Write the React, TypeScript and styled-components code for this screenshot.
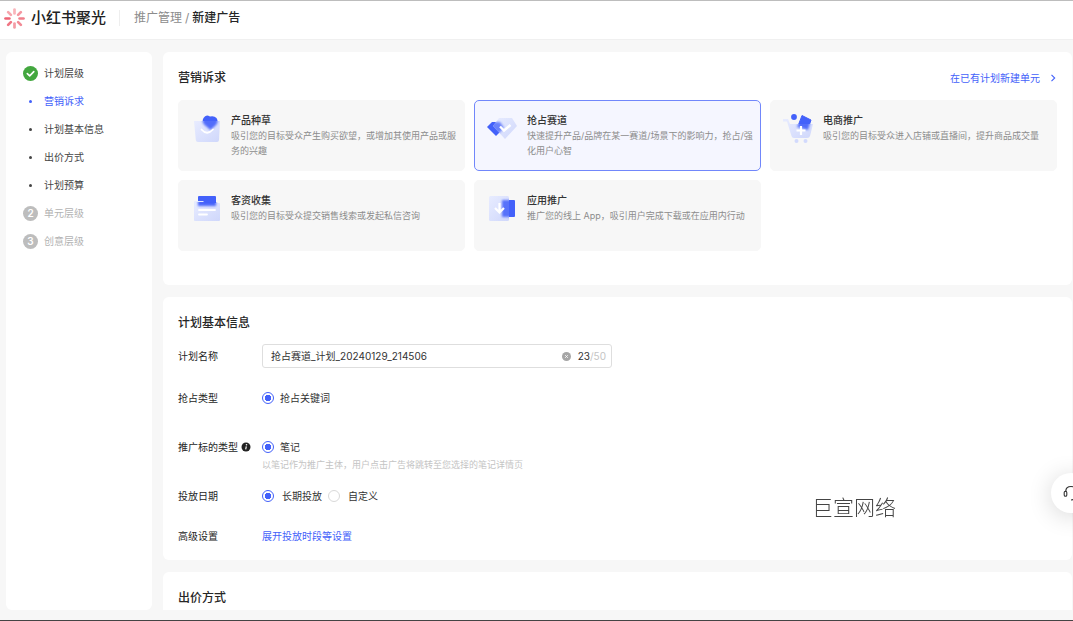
import React, { useState } from "react";
import styled, { createGlobalStyle } from "styled-components";

const blue = "#4361fa";

const GlobalStyle = createGlobalStyle`
  *, *::before, *::after { box-sizing: border-box; }
  body {
    margin: 0;
    background: #f7f7f7;
    color: #333;
    font-family: Inter, "Noto Sans CJK SC", sans-serif;
    font-size: 10px;
    line-height: 16px;
    overflow: hidden;
  }
  button, input { font: inherit; color: inherit; }
  h1, h2, h3, p, ul, ol { margin: 0; padding: 0; }
  ul, ol { list-style: none; }
`;

const Page = styled.div`
  display: flex;
  flex-direction: column;
  height: 100vh;
  border-top: 1px solid #bdbdbd;
  border-bottom: 1px solid #444;
`;

const Header = styled.header`
  display: flex;
  align-items: center;
  flex: none;
  height: 39px;
  padding: 0 4px 4px;
  background: #fff;
  border-bottom: 1px solid #f0f0f0;
`;

const Brand = styled.a`
  display: flex;
  align-items: center;
  gap: 6px;
  padding-right: 13px;
  color: #222;
  font-size: 15px;
  font-weight: 500;
  text-decoration: none;
`;

const Breadcrumb = styled.nav`
  display: flex;
  gap: 3px;
  padding-left: 14px;
  border-left: 1px solid #eee;
  color: #8c8c8c;
  font-size: 12px;

  a { color: inherit; text-decoration: none; }
  strong { color: #262626; font-weight: 500; }
`;

const Body = styled.div`
  display: flex;
  flex: 1;
  gap: 11px;
  min-height: 0;
  padding: 12px 1px 10px 6px;
`;

const Sidebar = styled.aside`
  flex: none;
  width: 146px;
  padding: 7px 17px;
  background: #fff;
  border-radius: 6px;
`;

const Step = styled.li<{ $tone?: "active" | "muted" }>`
  display: flex;
  align-items: center;
  gap: 6px;
  height: 28px;
  color: ${(p) => (p.$tone === "active" ? blue : p.$tone === "muted" ? "#b3b3b3" : "#444")};

  a { color: inherit; text-decoration: none; }
`;

const Marker = styled.span`
  display: flex;
  align-items: center;
  justify-content: center;
  width: 15px;
  height: 15px;
`;

const Dot = styled.span`
  width: 3px;
  height: 3px;
  border-radius: 50%;
  background: currentColor;
`;

const Num = styled(Marker)`
  border-radius: 50%;
  background: #bdbdbd;
  color: #fff;
  font-weight: 600;
`;

const Main = styled.main`
  display: flex;
  flex: 1;
  flex-direction: column;
  gap: 12px;
  min-width: 0;
  overflow-y: auto;
  scrollbar-width: none;
`;

const Panel = styled.section`
  flex: none;
  padding: 16px 15px 12px;
  background: #fff;
  border-radius: 6px;
`;

const GoalPanel = styled(Panel)`
  padding-bottom: 34px;
`;

const BidPanel = styled(Panel)`
  padding-bottom: 48px;
`;

const PanelHead = styled.div`
  display: flex;
  align-items: center;
  justify-content: space-between;
  height: 20px;
`;

const Title = styled.h2`
  color: #262626;
  font-size: 12px;
  font-weight: 500;
  line-height: 20px;
`;

const MoreLink = styled.a`
  display: flex;
  align-items: center;
  gap: 9px;
  color: ${blue};
  text-decoration: none;
`;

const Goals = styled.div`
  display: grid;
  grid-template-columns: repeat(3, 1fr);
  gap: 9px;
  margin-top: 12px;
`;

const Goal = styled.button<{ $selected: boolean }>`
  display: flex;
  align-items: flex-start;
  gap: 8px;
  min-height: 71px;
  padding: 11px 5px 11px 12px;
  border: 1px solid ${(p) => (p.$selected ? "#7187fb" : "#f7f7f7")};
  border-radius: 5px;
  background: ${(p) => (p.$selected ? "#f5f6ff" : "#f7f7f7")};
  text-align: left;
  cursor: pointer;

  svg { flex: none; }
`;

const GoalText = styled.span`
  display: flex;
  flex-direction: column;
`;

const GoalName = styled.span`
  color: #333;
  font-weight: 500;
`;

const GoalDesc = styled.span`
  color: #8c8c8c;
  font-size: 9px;
  line-height: 15px;
`;

const Form = styled.form`
  display: flex;
  flex-direction: column;
  margin-top: 11px;
`;

const Row = styled.div<{ $h: number }>`
  display: flex;
  min-height: ${(p) => p.$h}px;
`;

const RowLabel = styled.div`
  display: flex;
  align-items: center;
  gap: 3px;
  flex: none;
  width: 84px;
  height: 24px;
  color: #262626;
`;

const Control = styled.div`
  display: flex;
  align-items: center;
  flex-wrap: wrap;
  gap: 6px;
  height: 24px;
`;

const Stack = styled.div`
  display: flex;
  flex-direction: column;
`;

const Hint = styled.p`
  color: #c4c4c4;
  font-size: 9px;
  line-height: 12px;
`;

const NameBox = styled.div`
  display: flex;
  align-items: center;
  width: 350px;
  max-width: 100%;
  height: 24px;
  padding: 0 5px 0 8px;
  border: 1px solid #dedede;
  border-radius: 3px;
`;

const NameInput = styled.input`
  flex: 1;
  min-width: 0;
  padding: 0;
  border: 0;
  outline: 0;
  background: none;
  color: #333;
`;

const Clear = styled.button`
  display: flex;
  margin-right: 7px;
  padding: 0;
  border: 0;
  background: none;
  cursor: pointer;
`;

const Count = styled.span`
  color: #c4c4c4;

  b { color: #333; font-weight: 400; }
`;

const RadioLabel = styled.label`
  display: flex;
  align-items: center;
  gap: 6px;
  color: #333;
  cursor: pointer;
`;

const DateLabel = styled(RadioLabel)`
  gap: 8px;
`;

const Radio = styled.input`
  appearance: none;
  width: 12px;
  height: 12px;
  margin: 0;
  border: 1px solid #d9d9d9;
  border-radius: 50%;
  background: #fff;

  &:checked {
    border-color: ${blue};
    background: radial-gradient(circle, ${blue} 0 3px, #fff 3px);
  }
`;

const ExpandLink = styled.a`
  color: ${blue};
  text-decoration: none;
`;

const Watermark = styled.div`
  position: fixed;
  right: 177px;
  bottom: 99px;
  color: #444;
  font-family: "Noto Sans CJK SC", sans-serif;
  font-size: 21px;
  font-weight: 300;
  line-height: 32px;
  pointer-events: none;
`;

const Support = styled.button`
  position: fixed;
  right: -18px;
  bottom: 108px;
  display: flex;
  align-items: center;
  justify-content: center;
  width: 40px;
  height: 40px;
  padding: 0;
  border: 0;
  border-radius: 50%;
  background: #fff;
  box-shadow: 0 3px 24px rgba(0, 0, 0, 0.16);
  cursor: pointer;
`;

const petals = ["#f9b4ba", "#f598a2", "#f17f8b", "#f28a95", "#f49ca5", "#f07684", "#ee6475", "#f6a6ae"];

const Logo = () => (
  <svg width="21" height="21" viewBox="0 0 21 21" aria-hidden="true">
    {petals.map((c, i) => (
      <path key={i} d="M10.5 1.5V5.4" stroke={c} strokeWidth="2.7" strokeLinecap="round" transform={`rotate(${i * 45} 10.5 10.5)`} />
    ))}
  </svg>
);

const Defs = () => (
  <svg width="0" height="0" style={{ position: "absolute" }} aria-hidden="true">
    <defs>
      <linearGradient id="pale" x1="0" y1="0" x2="1" y2="1">
        <stop offset="0" stopColor="#e8ecff" />
        <stop offset="1" stopColor="#cfd7fb" />
      </linearGradient>
      <filter id="soft" x="-30%" y="-30%" width="160%" height="160%">
        <feGaussianBlur stdDeviation="1.3" />
      </filter>
      <clipPath id="bagClip"><path d="M1 7H27L26 26Q25.800 28 24 28H5Q3 28 2.800 26Z" /></clipPath>
      <clipPath id="docClip"><rect x="1" y="8" width="26" height="19" /></clipPath>
      <clipPath id="gemClip"><path d="M12 3H25L30 11L18 24L6 11Z" /></clipPath>
      <clipPath id="appClip"><rect x="3" y="2" width="19" height="25" /></clipPath>
      <clipPath id="cartClip"><path d="M5 10H30L27 22Q26.500 24 24 24H11Q9 24 8.500 22Z" /></clipPath>
    </defs>
  </svg>
);

const bagHeart = "M17.500 16L11 10.500Q8.500 7.500 10.500 4Q13-.2 17 2.600Q21 1.500 23.500 4Q26 8 23 11Z";
const BagIcon = () => (
  <svg width="32" height="30" viewBox="-2 -2 32 30" aria-hidden="true">
    <path d={bagHeart} fill={blue} />
    <path d="M1 7H27L26 26Q25.800 28 24 28H5Q3 28 2.800 26Z" fill="url(#pale)" />
    <g clipPath="url(#bagClip)"><path d={bagHeart} fill={blue} opacity=".9" filter="url(#soft)" /></g>
    <path d="M8.500 15.500Q14 22 20 15.500" fill="none" stroke="#fff" strokeWidth="1.800" strokeLinecap="round" />
  </svg>
);

const GemIcon = () => (
  <svg width="32" height="30" viewBox="0 -3 32 30" aria-hidden="true">
    <path d="M5 7H13L17 13L9 21L0 12Z" fill={blue} />
    <path d="M12 3H25L30 11L18 24L6 11Z" fill="url(#pale)" />
    <g clipPath="url(#gemClip)"><path d="M5 7H13L17 13L9 21L0 12Z" fill={blue} opacity=".75" filter="url(#soft)" /></g>
    <path d="M13 11.500L17 15.500L23.500 10" fill="none" stroke="#fff" strokeWidth="2.400" />
  </svg>
);

const CartIcon = () => (
  <svg width="32" height="31" viewBox="0 -2 32 31" aria-hidden="true">
    <circle cx="11" cy="3" r="2.900" fill={blue} />
    <path d="M19 1.500L28 6L25 15L15 12Z" fill={blue} stroke={blue} strokeLinejoin="round" />
    <path d="M0 5H5L7 10H30L27 22Q26.500 24 24 24H11Q9 24 8.500 22L4 7.500H0Z" fill="url(#pale)" />
    <g clipPath="url(#cartClip)"><path d="M19 1.500L28 6L25 16L14 13Z" fill={blue} opacity=".9" filter="url(#soft)" /></g>
    <path d="M18 12V21M13.500 16.500H22.500" stroke="#fff" strokeWidth="2.200" />
    <circle cx="13.500" cy="27" r="2" fill="#d2dafd" />
    <circle cx="22.500" cy="27" r="2" fill="#d2dafd" />
  </svg>
);

const DocIcon = () => (
  <svg width="32" height="30" viewBox="-2 -2 32 30" aria-hidden="true">
    <rect x="5" y="2" width="18" height="10" rx="1" fill={blue} />
    <path d="M1 8Q1 7 2 7H10L12 9H26Q27 9 27 10V26Q27 27 26 27H2Q1 27 1 26Z" fill="url(#pale)" />
    <g clipPath="url(#docClip)"><rect x="5" y="2" width="18" height="10" fill={blue} opacity=".95" filter="url(#soft)" /></g>
    <path d="M6 16H22M6 20.500H14" stroke="#fff" strokeWidth="1.800" strokeLinecap="round" />
  </svg>
);

const AppIcon = () => (
  <svg width="32" height="30" viewBox="0 -2 32 30" aria-hidden="true">
    <rect x="15" y="6" width="13" height="17" rx="1" fill={blue} />
    <rect x="2" y="2" width="20" height="25" rx="1.500" fill="url(#pale)" />
    <g clipPath="url(#appClip)"><rect x="15" y="6" width="12" height="17" fill={blue} opacity=".85" filter="url(#soft)" /></g>
    <path d="M12.500 9V18M8 14L12.500 18.500L17 14" fill="none" stroke="#fff" strokeWidth="2.200" />
  </svg>
);

const goals = [
  { name: "产品种草", desc: "吸引您的目标受众产生购买欲望，或增加其使用产品或服务的兴趣", Icon: BagIcon },
  { name: "抢占赛道", desc: "快速提升产品/品牌在某一赛道/场景下的影响力，抢占/强化用户心智", Icon: GemIcon },
  { name: "电商推广", desc: "吸引您的目标受众进入店铺或直播间，提升商品成交量", Icon: CartIcon },
  { name: "客资收集", desc: "吸引您的目标受众提交销售线索或发起私信咨询", Icon: DocIcon },
  { name: "应用推广", desc: "推广您的线上 App，吸引用户完成下载或在应用内行动", Icon: AppIcon },
];

const subSteps = ["营销诉求", "计划基本信息", "出价方式", "计划预算"];

export default function App() {
  const [goal, setGoal] = useState("抢占赛道");
  const [name, setName] = useState("抢占赛道_计划_20240129_214506");

  return (
    <>
      <GlobalStyle />
      <Defs />
      <Page>
        <Header>
          <Brand href="#"><Logo />小红书聚光</Brand>
          <Breadcrumb>
            <a href="#">推广管理</a><span>/</span><strong>新建广告</strong>
          </Breadcrumb>
        </Header>
        <Body>
          <Sidebar>
            <ol>
              <Step>
                <Marker>
                  <svg width="15" height="15" viewBox="0 0 15 15" aria-hidden="true">
                    <circle cx="7.500" cy="7.500" r="7.500" fill="#43a73f" />
                    <path d="M4.300 7.600L6.700 9.900L10.800 5.600" fill="none" stroke="#fff" strokeWidth="1.600" strokeLinecap="round" strokeLinejoin="round" />
                  </svg>
                </Marker>
                计划层级
              </Step>
              {subSteps.map((s, i) => (
                <Step key={s} $tone={i === 0 ? "active" : undefined}>
                  <Marker><Dot /></Marker><a href="#">{s}</a>
                </Step>
              ))}
              <Step $tone="muted"><Num>2</Num>单元层级</Step>
              <Step $tone="muted"><Num>3</Num>创意层级</Step>
            </ol>
          </Sidebar>
          <Main>
            <GoalPanel>
              <PanelHead>
                <Title>营销诉求</Title>
                <MoreLink href="#">
                  在已有计划新建单元
                  <svg width="8" height="8" viewBox="0 0 8 8" aria-hidden="true">
                    <path d="M2.500 .8L5.700 4L2.500 7.200" fill="none" stroke={blue} strokeWidth="1.100" />
                  </svg>
                </MoreLink>
              </PanelHead>
              <Goals>
                {goals.map(({ name: n, desc, Icon }) => (
                  <Goal key={n} type="button" $selected={goal === n} aria-pressed={goal === n} onClick={() => setGoal(n)}>
                    <Icon />
                    <GoalText><GoalName>{n}</GoalName><GoalDesc>{desc}</GoalDesc></GoalText>
                  </Goal>
                ))}
              </Goals>
            </GoalPanel>
            <Panel>
              <Title>计划基本信息</Title>
              <Form>
                <Row $h={42}>
                  <RowLabel as="label" htmlFor="plan-name">计划名称</RowLabel>
                  <NameBox>
                    <NameInput id="plan-name" value={name} maxLength={50} onChange={(e) => setName(e.target.value)} />
                    <Clear type="button" aria-label="清空" onClick={() => setName("")}>
                      <svg width="9" height="9" viewBox="0 0 9 9" aria-hidden="true">
                        <circle cx="4.500" cy="4.500" r="4.500" fill="#a6a6a6" />
                        <path d="M3.100 3.100L5.900 5.900M5.900 3.100L3.100 5.900" stroke="#fff" strokeWidth=".8" />
                      </svg>
                    </Clear>
                    <Count><b>{name.length}</b>/50</Count>
                  </NameBox>
                </Row>
                <Row $h={49}>
                  <RowLabel>抢占类型</RowLabel>
                  <Control><RadioLabel><Radio type="radio" name="kind" defaultChecked />抢占关键词</RadioLabel></Control>
                </Row>
                <Row $h={49}>
                  <RowLabel>
                    推广标的类型
                    <svg width="10" height="10" viewBox="0 0 10 10" aria-hidden="true">
                      <circle cx="5" cy="5" r="4.500" fill="#222" />
                      <path d="M5.300 4.300L4.700 7.300" stroke="#fff" strokeWidth="1.200" />
                      <circle cx="5.500" cy="2.700" r=".8" fill="#fff" />
                    </svg>
                  </RowLabel>
                  <Stack>
                    <Control><RadioLabel><Radio type="radio" name="target" defaultChecked />笔记</RadioLabel></Control>
                    <Hint>以笔记作为推广主体，用户点击广告将跳转至您选择的笔记详情页</Hint>
                  </Stack>
                </Row>
                <Row $h={40}>
                  <RowLabel>投放日期</RowLabel>
                  <Control>
                    <DateLabel><Radio type="radio" name="date" defaultChecked />长期投放</DateLabel>
                    <DateLabel><Radio type="radio" name="date" />自定义</DateLabel>
                  </Control>
                </Row>
                <Row $h={24}>
                  <RowLabel>高级设置</RowLabel>
                  <Control><ExpandLink href="#">展开投放时段等设置</ExpandLink></Control>
                </Row>
              </Form>
            </Panel>
            <BidPanel><Title>出价方式</Title></BidPanel>
          </Main>
        </Body>
      </Page>
      <Watermark>巨宣网络</Watermark>
      <Support type="button" aria-label="客服">
        <svg width="18" height="18" viewBox="0 0 18 18" aria-hidden="true">
          <path d="M3.800 8V7Q4 2.500 9 2.500Q14 2.500 14.200 7V8" fill="none" stroke="#333" strokeWidth="1.200" />
          <rect x="2.200" y="7.200" width="2.600" height="5" rx="1.300" fill="none" stroke="#333" strokeWidth="1.100" />
          <rect x="13.200" y="7.200" width="2.600" height="5" rx="1.300" fill="none" stroke="#333" strokeWidth="1.100" />
          <path d="M14.500 12Q13.500 15.800 9 16" fill="none" stroke="#333" strokeWidth="1.200" />
        </svg>
      </Support>
    </>
  );
}
